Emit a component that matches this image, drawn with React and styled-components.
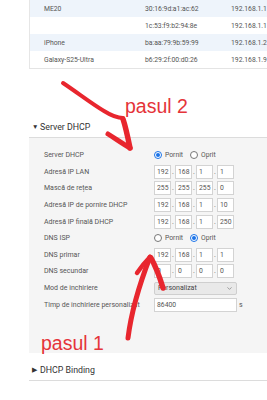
import React from 'react';
import styled, { createGlobalStyle } from 'styled-components';
import { ChevronDown } from 'lucide-react';

const GlobalStyle = createGlobalStyle`
    body {
        margin: 0;
        background: #fff;
        overflow: hidden;
        font-family: Roboto, 'Liberation Sans', sans-serif;
    }
`

const Page = styled.div`
    position: relative;
    width: 267px;
    height: 400px;
    overflow: hidden;
`

const Content = styled.div`
    padding-left: 29px;
    width: 340px;
`

const Table = styled.div`
    border-left: 1px solid #e6e6e6;
    border-bottom: 1px solid #e4e4e4;
`

const Row = styled.div`
    display: grid;
    grid-template-columns: 101px 86px 1fr;
    align-items: center;
    height: 17px;
    padding-left: 14px;
    background: ${props => props.striped ? '#eef4fb' : '#fff'};
    font-size: 6.8px;
    color: #555;
    white-space: nowrap;
`

const SectionHead = styled.div`
    display: flex;
    align-items: center;
    height: 20px;
    margin-top: ${props => props.gap}px;
    border-bottom: 1px solid #dcdcdc;
    font-size: 8.8px;
    color: #333;
`

const Caret = styled.span`
    width: 11px;
    padding-left: 3px;
    box-sizing: border-box;
    font-size: 6.5px;
    color: #333;
`

const Panel = styled.div`
    background: #f5f5f5;
    padding: 9px 0 40px 15px;
`

const FormRow = styled.div`
    display: grid;
    grid-template-columns: 110px 1fr;
    align-items: center;
    height: 16.6px;
`

const Label = styled.div`
    font-size: 7px;
    color: #555;
    white-space: nowrap;
`

const Controls = styled.div`
    display: flex;
    align-items: center;
`

const Octet = styled.div`
    width: 17px;
    height: 14px;
    box-sizing: border-box;
    border: 1px solid #d3d3d3;
    background: #fff;
    font-size: 6.8px;
    color: #555;
    padding-left: 2px;
    display: flex;
    align-items: center;
`

const Dot = styled.span`
    width: 4px;
    text-align: center;
    font-size: 7px;
    color: #666;
`

const RadioCircle = styled.span`
    width: 8px;
    height: 8px;
    box-sizing: border-box;
    border-radius: 50%;
    border: 1px solid ${props => props.checked ? '#1a73e8' : '#777'};
    background: #fff;
    display: flex;
    align-items: center;
    justify-content: center;
    &::after {
        content: '';
        width: 4px;
        height: 4px;
        border-radius: 50%;
        background: ${props => props.checked ? '#1a73e8' : 'transparent'};
    }
`

const RadioText = styled.span`
    font-size: 6.8px;
    color: #555;
    margin: 0 7px 0 3px;
`

const SelectBox = styled.div`
    width: 83px;
    height: 13px;
    box-sizing: border-box;
    border: 1px solid #cfcfcf;
    border-radius: 2px;
    background: #e9e9e9;
    display: flex;
    align-items: center;
    justify-content: space-between;
    padding: 0 3px;
    font-size: 7px;
    color: #444;
`

const TextBox = styled.div`
    width: 83px;
    height: 14px;
    box-sizing: border-box;
    border: 1px solid #d3d3d3;
    background: #fff;
    display: flex;
    align-items: center;
    padding-left: 2px;
    font-size: 6.8px;
    color: #555;
`

const Unit = styled.span`
    font-size: 7px;
    color: #555;
    margin-left: 2px;
`

const Scribble = styled.svg`
    position: absolute;
    top: 0;
    left: 0;
    pointer-events: none;
`

const Note = styled.span`
    position: absolute;
    left: ${props => props.x}px;
    top: ${props => props.y}px;
    font-family: 'Liberation Sans', Arial, sans-serif;
    font-size: 19.5px;
    line-height: 20px;
    color: #e5343a;
    white-space: nowrap;
`

const clients = [
    { name: 'ME20', mac: '30:16:9d:a1:ac:62', ip: '192.168.1.1' },
    { name: '', mac: '1c:53:f9:b2:94:8e', ip: '192.168.1.1' },
    { name: 'iPhone', mac: 'ba:aa:79:9b:59:99', ip: '192.168.1.2' },
    { name: 'Galaxy-S25-Ultra', mac: 'b6:29:2f:00:d0:26', ip: '192.168.1.9' },
]

const IpField = ({ parts }) => (
    <Controls>
        {parts.map((p, i) => (
            <React.Fragment key={i}>
                {i > 0 && <Dot>.</Dot>}
                <Octet>{p}</Octet>
            </React.Fragment>
        ))}
    </Controls>
)

const RadioPair = ({ on }) => (
    <Controls>
        <RadioCircle checked={on} />
        <RadioText>Pornit</RadioText>
        <RadioCircle checked={!on} />
        <RadioText>Oprit</RadioText>
    </Controls>
)

export default function App() {
    return (
        <Page>
            <GlobalStyle />
            <Content>
                <Table>
                    {clients.map((c, i) => (
                        <Row key={i} striped={i % 2 === 0}>
                            <span>{c.name}</span>
                            <span>{c.mac}</span>
                            <span>{c.ip}</span>
                        </Row>
                    ))}
                </Table>

                <SectionHead gap={48}><Caret>▼</Caret>Server DHCP</SectionHead>
                <Panel>
                    <FormRow><Label>Server DHCP</Label><RadioPair on /></FormRow>
                    <FormRow><Label>Adresă IP LAN</Label><IpField parts={['192', '168', '1', '1']} /></FormRow>
                    <FormRow><Label>Mască de rețea</Label><IpField parts={['255', '255', '255', '0']} /></FormRow>
                    <FormRow><Label>Adresă IP de pornire DHCP</Label><IpField parts={['192', '168', '1', '10']} /></FormRow>
                    <FormRow><Label>Adresă IP finală DHCP</Label><IpField parts={['192', '168', '1', '250']} /></FormRow>
                    <FormRow><Label>DNS ISP</Label><RadioPair on={false} /></FormRow>
                    <FormRow><Label>DNS primar</Label><IpField parts={['192', '168', '1', '1']} /></FormRow>
                    <FormRow><Label>DNS secundar</Label><IpField parts={['0', '0', '0', '0']} /></FormRow>
                    <FormRow>
                        <Label>Mod de închiriere</Label>
                        <Controls>
                            <SelectBox>Personalizat<ChevronDown size={7} color="#666" /></SelectBox>
                        </Controls>
                    </FormRow>
                    <FormRow>
                        <Label>Timp de închiriere personalizat</Label>
                        <Controls><TextBox>86400</TextBox><Unit>s</Unit></Controls>
                    </FormRow>
                </Panel>

                <SectionHead gap={7}><Caret>▶</Caret>DHCP Binding</SectionHead>
            </Content>

            <Scribble width="267" height="400" viewBox="0 0 267 400">
                <g fill="none" stroke="#e8262e" strokeLinecap="round" strokeLinejoin="round">
                    <path strokeWidth="4" d="M63,83 C78,93 92,104 104,111 C112,116 118,118 123,118" />
                    <path strokeWidth="5.5" d="M123,119 C126,128 128,138 130,148" />
                    <path strokeWidth="5" d="M108,134 C116,139 123,144 130,148" />
                    <path strokeWidth="5" d="M128,338 C131,314 138,288 150,257" />
                    <path strokeWidth="4.5" d="M137,273 C141,267 146,261 150,257" />
                    <path strokeWidth="5.5" d="M151,258 C156,267 160,278 163,288" />
                </g>
            </Scribble>
            <Note x={125} y={96}>pasul 2</Note>
            <Note x={41} y={333}>pasul 1</Note>
        </Page>
    );
}
